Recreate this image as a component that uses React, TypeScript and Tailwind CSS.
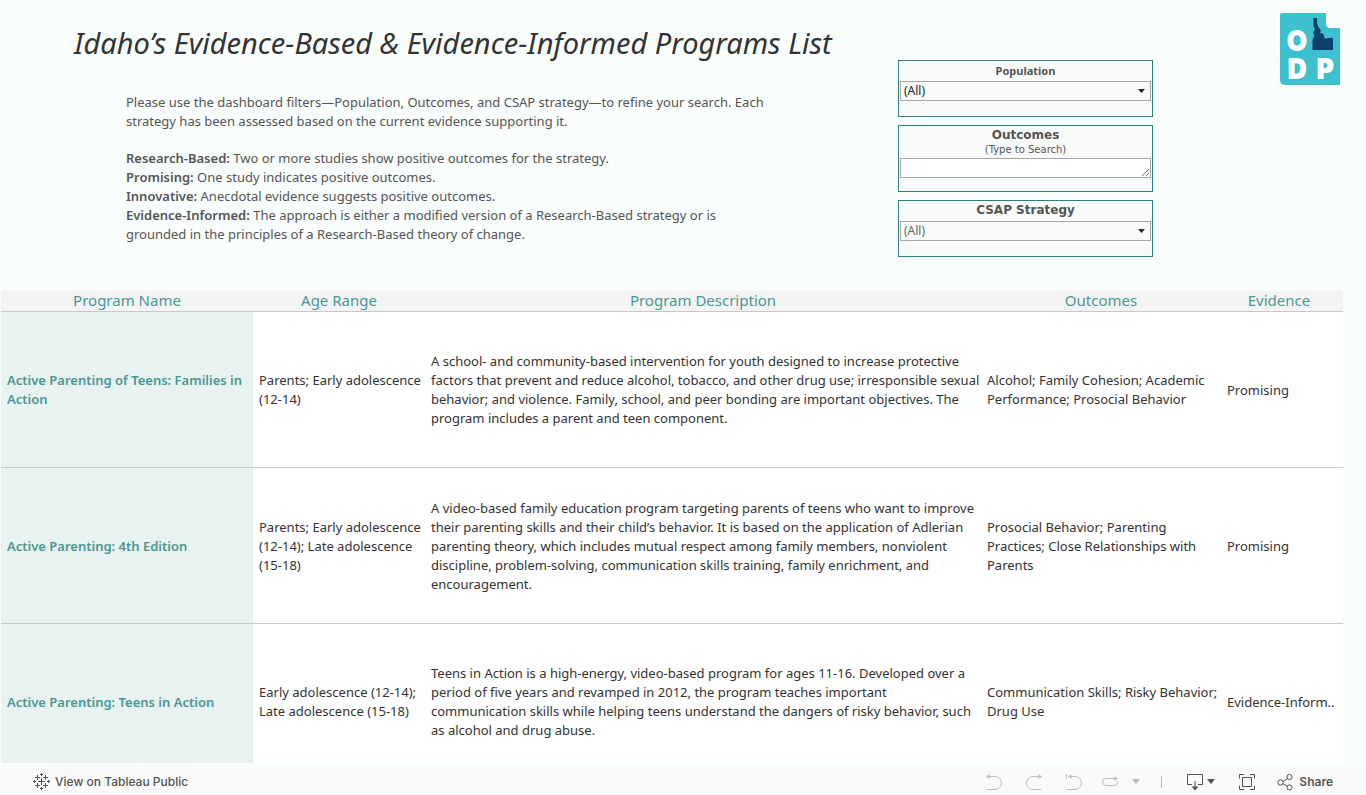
import { ReactNode } from "react";

const programs = [
  {
    name: "Active Parenting of Teens: Families in\nAction",
    age: "Parents; Early adolescence\n(12-14)",
    description:
      "A school- and community-based intervention for youth designed to increase protective\nfactors that prevent and reduce alcohol, tobacco, and other drug use; irresponsible sexual\nbehavior; and violence. Family, school, and peer bonding are important objectives. The\nprogram includes a parent and teen component.",
    outcomes: "Alcohol; Family Cohesion; Academic\nPerformance; Prosocial Behavior",
    evidence: "Promising",
  },
  {
    name: "Active Parenting: 4th Edition",
    age: "Parents; Early adolescence\n(12-14); Late adolescence\n(15-18)",
    description:
      "A video-based family education program targeting parents of teens who want to improve\ntheir parenting skills and their child’s behavior. It is based on the application of Adlerian\nparenting theory, which includes mutual respect among family members, nonviolent\ndiscipline, problem-solving, communication skills training, family enrichment, and\nencouragement.",
    outcomes:
      "Prosocial Behavior; Parenting\nPractices; Close Relationships with\nParents",
    evidence: "Promising",
  },
  {
    name: "Active Parenting: Teens in Action",
    age: "Early adolescence (12-14);\nLate adolescence (15-18)",
    description:
      "Teens in Action is a high-energy, video-based program for ages 11-16. Developed over a\nperiod of five years and revamped in 2012, the program teaches important\ncommunication skills while helping teens understand the dangers of risky behavior, such\nas alcohol and drug abuse.",
    outcomes: "Communication Skills; Risky Behavior;\nDrug Use",
    evidence: "Evidence-Inform..",
  },
];

const ratings = [
  {
    term: "Research-Based",
    text: "Two or more studies show positive outcomes for the strategy.",
  },
  { term: "Promising", text: "One study indicates positive outcomes." },
  { term: "Innovative", text: "Anecdotal evidence suggests positive outcomes." },
  {
    term: "Evidence-Informed",
    text: "The approach is either a modified version of a Research-Based strategy or is",
    more: "grounded in the principles of a Research-Based theory of change.",
  },
];

function Logo() {
  return (
    <svg width="60" height="72" viewBox="0 0 60 72" role="img" aria-label="ODP">
      <path
        d="M2 0H46V10Q46 15 51 15H60V72H5Q0 72 0 67V2Q0 0 2 0Z"
        fill="#3dc1ce"
      />
      <path d="M46 0L60 14V15H51Q46 15 46 10Z" fill="#fff" />
      <path
        d="M33.5 5H37V10L38.5 14.5L41 17L40 20L43 20.5L45 26L47.5 25L52 25L53 24.5V37H32.5V27L34.5 22L33 20L35 16L33.5 13Z"
        fill="#0b416b"
      />
      <g
        fill="#fff"
        stroke="#fff"
        strokeWidth="2"
        textAnchor="middle"
        className="font-['Inter',sans-serif] text-[25px] font-bold"
      >
        <text x="17" y="37">O</text>
        <text x="17" y="65">D</text>
        <text x="45" y="65">P</text>
      </g>
    </svg>
  );
}

function SelectFilter({
  id,
  label,
  labelClass,
  selectClass,
}: {
  id: string;
  label: string;
  labelClass: string;
  selectClass: string;
}) {
  return (
    <div className="h-[57px] border border-[#2b8079] bg-[#f9fbfa] px-px">
      <label
        htmlFor={id}
        className={`block h-5 text-center font-bold text-[#555] ${labelClass}`}
      >
        {label}
      </label>
      <div className="relative">
        <select
          id={id}
          className={`block h-5 w-full appearance-none border border-[#a6a6a6] px-[3px] font-['Noto_Sans',sans-serif] text-xs leading-[18px] ${selectClass}`}
        >
          <option>(All)</option>
        </select>
        <svg
          width="7"
          height="4"
          className="pointer-events-none absolute right-1.5 top-2"
          aria-hidden="true"
        >
          <path d="M0 0H7L3.5 4Z" fill="#222" />
        </svg>
      </div>
    </div>
  );
}

function ToolButton({
  label,
  disabled,
  children,
}: {
  label: string;
  disabled?: boolean;
  children: ReactNode;
}) {
  return (
    <button
      type="button"
      aria-label={label}
      disabled={disabled}
      className={
        disabled
          ? "flex h-5 items-center text-[#bdbdbd]"
          : "flex h-5 items-center text-[#555]"
      }
    >
      {children}
    </button>
  );
}

function Stroke({ width, children }: { width: number; children: ReactNode }) {
  return (
    <svg
      width={width}
      height="18"
      viewBox={`0 0 ${width} 18`}
      fill="none"
      stroke="currentColor"
      strokeWidth="1"
      aria-hidden="true"
    >
      {children}
    </svg>
  );
}

function TableauIcon() {
  return (
    <svg width="17" height="17" viewBox="0 0 17 17" stroke="#555" strokeWidth="1" aria-hidden="true">
      <path d="M8.5 5V12M5 8.5H12M8.5 0V3M7 1.5H10M8.5 14V17M7 15.5H10M1.5 7V10M0 8.5H3M15.5 7V10M14 8.5H17M4.5 2V7M2 4.5H7M12.5 2V7M10 4.5H15M4.5 10V15M2 12.5H7M12.5 10V15M10 12.5H15" />
    </svg>
  );
}

function Toolbar() {
  return (
    <footer className="flex h-[27px] shrink-0 items-center justify-between bg-[#fafafa] pl-[33px] pr-[33px] font-['Inter',sans-serif] text-xs font-medium text-[#555]">
      <a href="#" className="flex items-center gap-[5px]">
        <TableauIcon />
        View on Tableau Public
      </a>
      <div className="flex items-center">
        <div className="flex items-center gap-6">
          <ToolButton label="Undo" disabled>
            <Stroke width={16}>
              <path d="M1 3.5H9A6.5 6.5 0 0 1 9 16.5H1" />
              <path d="M0 3.5L3.5 1V6Z" fill="currentColor" stroke="none" />
            </Stroke>
          </ToolButton>
          <ToolButton label="Redo" disabled>
            <Stroke width={16}>
              <path d="M15 3.5H7A6.5 6.5 0 0 0 7 16.5H15" />
              <path d="M16 3.5L12.5 1V6Z" fill="currentColor" stroke="none" />
            </Stroke>
          </ToolButton>
          <ToolButton label="Revert" disabled>
            <Stroke width={16}>
              <path d="M.5 1V6M3 3.5H9A6.5 6.5 0 0 1 9 16.5H1" />
              <path d="M2 3.5L5.5 1V6Z" fill="currentColor" stroke="none" />
            </Stroke>
          </ToolButton>
        </div>
        <div className="ml-5 flex items-center gap-3.5">
          <ToolButton label="Refresh" disabled>
            <Stroke width={16}>
              <path d="M14 5.5H4A3.5 3.5 0 0 0 4 12.5H12A3.5 3.5 0 0 0 15.5 9V8" />
              <path d="M16 5.5L12.5 3V8Z" fill="currentColor" stroke="none" />
            </Stroke>
          </ToolButton>
          <ToolButton label="Refresh options" disabled>
            <svg width="8" height="5" aria-hidden="true">
              <path d="M0 0H8L4 5Z" fill="currentColor" />
            </svg>
          </ToolButton>
        </div>
        <span className="ml-[21px] mr-[17px] h-3 border-l border-[#bdbdbd] px-1" />
        <ToolButton label="Download">
          <Stroke width={16}>
            <path d="M5 11.5H.5V1.5H15.5V11.5H11M8 8V14" />
            <path d="M4.5 13.5H11.5L8 17.5Z" fill="currentColor" stroke="none" />
          </Stroke>
          <svg width="8" height="5" className="ml-1" aria-hidden="true">
            <path d="M0 0H8L4 5Z" fill="currentColor" />
          </svg>
        </ToolButton>
        <div className="ml-6 flex items-center gap-[22px]">
          <ToolButton label="Full screen">
            <Stroke width={16}>
              <path d="M.5 5.5V1.5H5M11 1.5H15.5V5.5M15.5 12.5V16.5H11M5 16.5H.5V12.5M3.5 4.5H12.5V13.5H3.5Z" />
            </Stroke>
          </ToolButton>
          <button type="button" className="flex items-center gap-1.5 font-semibold">
            <Stroke width={16}>
              <circle cx="3.5" cy="9.5" r="2.7" />
              <circle cx="12.5" cy="4" r="2.6" />
              <circle cx="12.5" cy="14.5" r="2.6" />
              <path d="M6 8.5L10.5 5.5M6 10.7L10.5 13.2" />
            </Stroke>
            Share
          </button>
        </div>
      </div>
    </footer>
  );
}

export default function App() {
  return (
    <div className="flex h-screen flex-col overflow-hidden bg-[#f9fdfc] font-['Noto_Sans',sans-serif] text-[13px] leading-[19px] text-[#333]">
      <header className="flex h-[291px] shrink-0 items-start pr-[26px]">
        <div className="flex-1">
          <h1 className="pl-[74px] pt-[23px] text-[29px] italic leading-10">
            Idaho’s Evidence-Based &amp; Evidence-Informed Programs List
          </h1>
          <div className="whitespace-pre pl-[126px] pt-[30px] text-[#555]">
            <p className="mb-[18px]">
              {
                "Please use the dashboard filters—Population, Outcomes, and CSAP strategy—to refine your search. Each\nstrategy has been assessed based on the current evidence supporting it."
              }
            </p>
            {ratings.map((rating) => (
              <p key={rating.term}>
                <b className="font-semibold">{rating.term}:</b> {rating.text}
                {rating.more && <span className="block">{rating.more}</span>}
              </p>
            ))}
          </div>
        </div>
        <div className="mr-[127px] mt-[60px] flex w-[255px] shrink-0 flex-col gap-2">
          <SelectFilter
            id="population"
            label="Population"
            labelClass="text-[11px] leading-5"
            selectClass="text-[#222]"
          />
          <div className="h-[67px] border border-[#2b8079] bg-[#f9fbfa] px-px">
            <label
              htmlFor="outcomes"
              className="block h-8 text-center font-['DejaVu_Sans',sans-serif] text-xs font-bold leading-[18px] text-[#555]"
            >
              Outcomes
              <span className="block text-[10px] font-normal leading-3">
                (Type to Search)
              </span>
            </label>
            <textarea
              id="outcomes"
              className="block h-5 w-full resize overflow-hidden border border-[#a6a6a6] bg-white"
            />
          </div>
          <SelectFilter
            id="csap"
            label="CSAP Strategy"
            labelClass="font-['DejaVu_Sans',sans-serif] text-xs leading-[18px]"
            selectClass="text-[#666]"
          />
        </div>
        <div className="mt-[13px]">
          <Logo />
        </div>
      </header>

      <main className="mb-[5px] min-h-0 flex-1 overflow-hidden pl-px pr-[23px]">
        <table className="w-full table-fixed border-collapse bg-white text-left">
          <thead className="bg-[#f4f4f4] text-[15px] text-[#499894]">
            <tr className="h-5 border-b border-[#c8c8c8] text-center">
              <th className="w-[252px] p-0 font-normal">Program Name</th>
              <th className="w-[172px] p-0 font-normal">Age Range</th>
              <th className="p-0 font-normal">Program Description</th>
              <th className="w-[240px] p-0 font-normal">Outcomes</th>
              <th className="w-[122px] p-0 pr-1.5 font-normal">Evidence</th>
            </tr>
          </thead>
          <tbody className="whitespace-pre">
            {programs.map((program) => (
              <tr key={program.name} className="h-[156px] border-b border-[#c8c8c8]">
                <th className="bg-[#e8f2f0] p-0 pl-1.5 pt-0.5 font-semibold text-[#499894]">
                  {program.name}
                </th>
                <td className="p-0 pl-1.5 pt-0.5">{program.age}</td>
                <td className="p-0 pl-1.5 pt-0.5">{program.description}</td>
                <td className="p-0 pl-1.5 pt-0.5">{program.outcomes}</td>
                <td className="p-0 pl-1.5 pt-0.5">{program.evidence}</td>
              </tr>
            ))}
          </tbody>
        </table>
      </main>

      <Toolbar />
    </div>
  );
}
